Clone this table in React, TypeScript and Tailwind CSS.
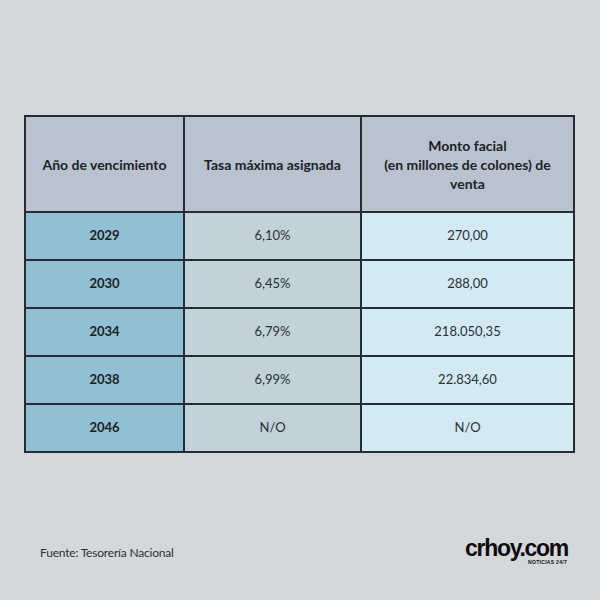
const rows = [
  { year: "2029", rate: "6,10%", amount: "270,00" },
  { year: "2030", rate: "6,45%", amount: "288,00" },
  { year: "2034", rate: "6,79%", amount: "218.050,35" },
  { year: "2038", rate: "6,99%", amount: "22.834,60" },
  { year: "2046", rate: "N/O", amount: "N/O" },
]

export default function App() {
  return (
    <div
      className="w-[600px] h-[600px] bg-[#d5d8db] flex flex-col pt-[115px] px-[24px]"
      style={{ fontFamily: "Lato, 'Open Sans', sans-serif" }}
    >
      {/* Table */}
      <div className="grid grid-cols-[157px_175px_211px] grid-rows-[94px_repeat(5,46px)] gap-[2px] p-[2px] bg-[#262c31] w-[551px]">
        <div className="bg-[#b8c3cf] flex items-center justify-center text-center text-[14px] font-bold text-[#1c2126]">
          Año de vencimiento
        </div>
        <div className="bg-[#b8c3cf] flex items-center justify-center text-center text-[14px] font-bold text-[#1c2126]">
          Tasa máxima asignada
        </div>
        <div className="bg-[#b8c3cf] flex items-center justify-center text-center text-[14px] font-bold leading-[19px] text-[#1c2126]">
          Monto facial
          <br />
          (en millones de colones) de
          <br />
          venta
        </div>
        {rows.map((r) => (
          <>
            <div key={r.year + "a"} className="bg-[#91bfd4] flex items-center justify-center text-[13px] font-bold text-[#1c2126]">
              {r.year}
            </div>
            <div key={r.year + "b"} className="bg-[#c2d2d9] flex items-center justify-center text-[13px] text-[#2a2f34]">
              {r.rate}
            </div>
            <div key={r.year + "c"} className="bg-[#d3eaf4] flex items-center justify-center text-[13px] text-[#2a2f34]">
              {r.amount}
            </div>
          </>
        ))}
      </div>

      {/* Footer */}
      <div className="flex items-end justify-between mt-[86px] pl-[16px] pr-[8px]">
        <div className="text-[12px] text-[#2b2f33] mb-[3px] tracking-[-0.2px]">
          Fuente: Tesorería Nacional
        </div>
        <div className="flex flex-col items-end" style={{ fontFamily: "'Liberation Sans', Arial, sans-serif" }}>
          <div className="text-[23px] font-black leading-[19px] tracking-[-1.3px] text-[#0b0b0b]">crhoy.com</div>
          <div className="text-[5px] font-bold leading-[6px] text-[#0b0b0b] tracking-[0.3px] mt-[1px] mr-[1px]">NOTICIAS 24/7</div>
        </div>
      </div>
    </div>
  )
}
